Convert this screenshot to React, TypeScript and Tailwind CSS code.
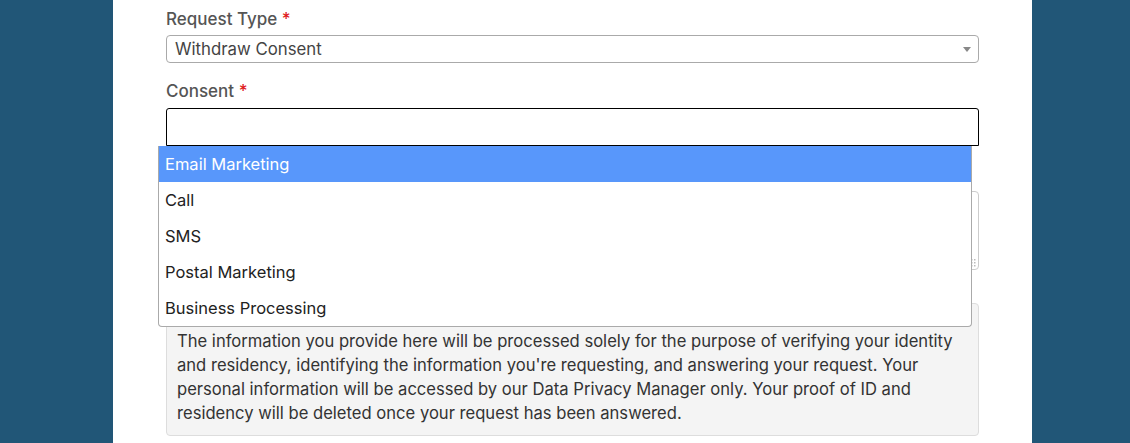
import React from "react";

const options = ["Email Marketing", "Call", "SMS", "Postal Marketing", "Business Processing"];

const notice = [
  "The information you provide here will be processed solely for the purpose of verifying your identity",
  "and residency, identifying the information you're requesting, and answering your request. Your",
  "personal information will be accessed by our Data Privacy Manager only. Your proof of ID and",
  "residency will be deleted once your request has been answered.",
];

function Label({ text }: { text: string }) {
  return (
    <label className="block text-[17px] leading-[20px] font-medium text-[#555]">
      {text} <span className="text-[#e0201c]">*</span>
    </label>
  );
}

export default function App() {
  return (
    <div
      className="h-[443px] w-full overflow-hidden bg-[#215677]"
      style={{ fontFamily: "Inter, 'Noto Sans', sans-serif" }}
    >
      <div className="ml-[113px] h-full w-[919px] bg-white px-[53px] pt-[9px]">
        <Label text="Request Type" />
        <div className="mt-[6px] flex h-[28px] items-center justify-between rounded-[4px] border border-[#aaa] pl-[8px] pr-[7px] pt-[2px]">
          <span className="text-[16.8px] text-[#444]">Withdraw Consent</span>
          <span className="mb-[2px] h-0 w-0 border-x-[4px] border-t-[5px] border-x-transparent border-t-[#888]" />
        </div>

        <div className="mt-[18px]">
          <Label text="Consent" />
        </div>
        <div className="relative mt-[7px]">
          <div className="h-[38px] rounded-t-[3px] border border-black bg-white" />
          <ul className="absolute left-[-8px] top-full z-10 w-[814px] overflow-hidden rounded-b-[4px] border border-t-0 border-[#aaa] bg-white">
            {options.map((o, i) => (
              <li
                key={o}
                className={
                  "flex h-[36px] items-center px-[6px] text-[16.5px] " +
                  (i === 0 ? "bg-[#5897fb] text-white" : "text-[#222]")
                }
              >
                {o}
              </li>
            ))}
          </ul>
        </div>

        {/* textarea sitting under the open dropdown */}
        <div className="relative mt-[45px] h-[79px] rounded-[4px] border border-[#ccc]">
          <svg className="absolute bottom-[2px] right-[2px]" width="5" height="8" viewBox="0 0 5 8">
            <rect x="0" y="0" width="1.5" height="1.5" fill="#bbb" />
            <rect x="3" y="0" width="1.5" height="1.5" fill="#bbb" />
            <rect x="0" y="3" width="1.5" height="1.5" fill="#bbb" />
            <rect x="3" y="3" width="1.5" height="1.5" fill="#bbb" />
            <rect x="0" y="6" width="1.5" height="1.5" fill="#bbb" />
            <rect x="3" y="6" width="1.5" height="1.5" fill="#bbb" />
          </svg>
        </div>

        <div className="mt-[33px] rounded-[4px] border border-[#ddd] bg-[#f4f4f4] px-[10px] pb-[10px] pt-[25px] text-[16.6px] leading-[24px] text-[#333]">
          {notice.map((line) => (
            <div key={line} className="whitespace-nowrap">
              {line}
            </div>
          ))}
        </div>
      </div>
    </div>
  );
}
